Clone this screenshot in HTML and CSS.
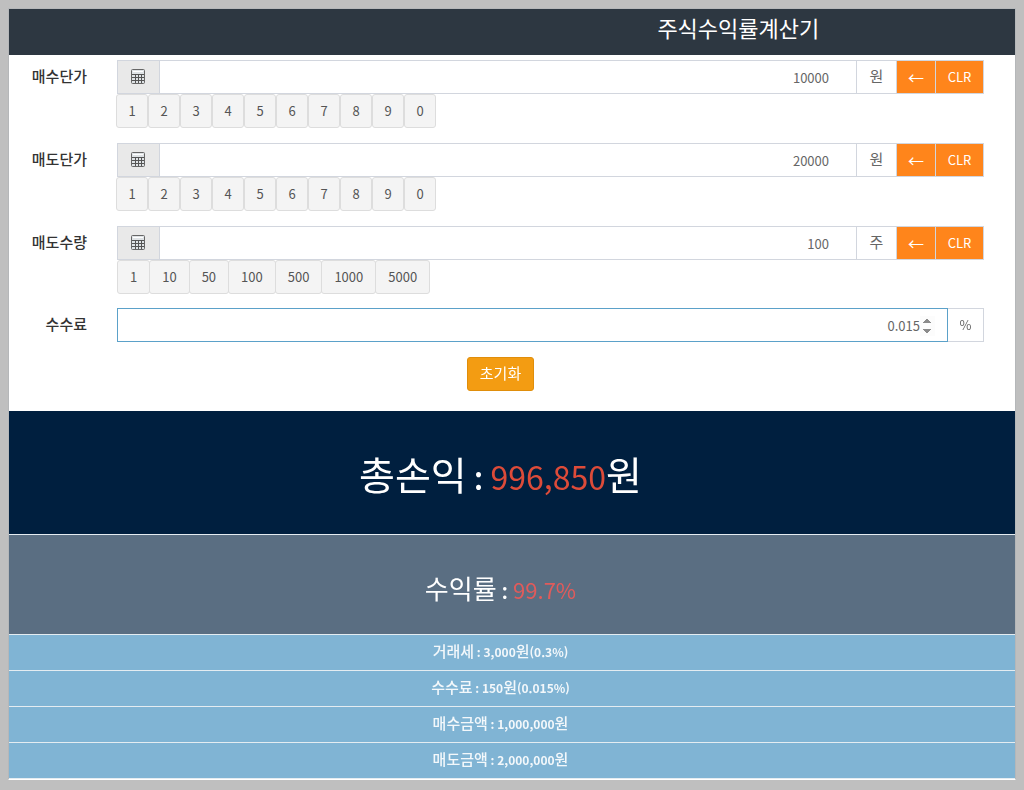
FILE: index.html
```html
<!DOCTYPE html>
<html lang="ko">
<head>
<meta charset="utf-8">
<meta name="viewport" content="width=device-width, initial-scale=1">
<title>주식수익률계산기</title>
<link rel="stylesheet" href="styles.css">
</head>
<body>
<svg class="defs" aria-hidden="true">
  <symbol id="calc" viewBox="0 0 14 15">
    <rect x="0.5" y="0.5" width="13" height="14" rx="1" fill="#dfe3e6" stroke="#666"/>
    <path d="M2 2.5h10" stroke="#fff"/>
    <path d="M1 5.5h12M1 8.5h12M1 11.5h12M4.5 5v9M7.5 5v9M10.5 5v9" fill="none" stroke="#555"/>
  </symbol>
</svg>
<main class="app">
  <header class="header"><h1 class="title">주식수익률계산기</h1></header>
  <form class="form">
    <div class="row">
      <label class="label" for="buy">매수단가</label>
      <div class="field">
        <div class="group">
          <span class="addon icon"><svg class="calc" aria-hidden="true"><use href="#calc"/></svg></span>
          <input class="input" id="buy" type="number" value="10000">
          <span class="addon unit">원</span>
          <button class="action back" type="button" aria-label="지우기">←</button>
          <button class="action clear" type="button">CLR</button>
        </div>
        <div class="keys digits">
          <button class="key" type="button">1</button><button class="key" type="button">2</button><button class="key" type="button">3</button><button class="key" type="button">4</button><button class="key" type="button">5</button><button class="key" type="button">6</button><button class="key" type="button">7</button><button class="key" type="button">8</button><button class="key" type="button">9</button><button class="key" type="button">0</button>
        </div>
      </div>
    </div>
    <div class="row">
      <label class="label" for="sell">매도단가</label>
      <div class="field">
        <div class="group">
          <span class="addon icon"><svg class="calc" aria-hidden="true"><use href="#calc"/></svg></span>
          <input class="input" id="sell" type="number" value="20000">
          <span class="addon unit">원</span>
          <button class="action back" type="button" aria-label="지우기">←</button>
          <button class="action clear" type="button">CLR</button>
        </div>
        <div class="keys digits">
          <button class="key" type="button">1</button><button class="key" type="button">2</button><button class="key" type="button">3</button><button class="key" type="button">4</button><button class="key" type="button">5</button><button class="key" type="button">6</button><button class="key" type="button">7</button><button class="key" type="button">8</button><button class="key" type="button">9</button><button class="key" type="button">0</button>
        </div>
      </div>
    </div>
    <div class="row">
      <label class="label" for="count">매도수량</label>
      <div class="field">
        <div class="group">
          <span class="addon icon"><svg class="calc" aria-hidden="true"><use href="#calc"/></svg></span>
          <input class="input" id="count" type="number" value="100">
          <span class="addon unit">주</span>
          <button class="action back" type="button" aria-label="지우기">←</button>
          <button class="action clear" type="button">CLR</button>
        </div>
        <div class="keys presets">
          <button class="key" type="button">1</button><button class="key" type="button">10</button><button class="key" type="button">50</button><button class="key" type="button">100</button><button class="key" type="button">500</button><button class="key" type="button">1000</button><button class="key" type="button">5000</button>
        </div>
      </div>
    </div>
    <div class="row">
      <label class="label" for="fee">수수료</label>
      <div class="field">
        <div class="group">
          <input class="input fee" id="fee" type="number" step="0.001" value="0.015" autofocus>
          <span class="addon percent">%</span>
        </div>
      </div>
    </div>
    <div class="submit"><button class="reset" type="button">초기화</button></div>
  </form>
  <section class="results">
    <p class="result total">총손익<span class="colon" lang="en"> : </span><span class="amount">996,850</span>원</p>
    <p class="result rate">수익률<span class="colon" lang="en"> : </span><span class="amount">99.7%</span></p>
    <p class="result detail">거래세<span class="colon" lang="en"> : </span><span class="amount">3,000</span>원<span class="amount">(0.3%)</span></p>
    <p class="result detail">수수료<span class="colon" lang="en"> : </span><span class="amount">150</span>원<span class="amount">(0.015%)</span></p>
    <p class="result detail">매수금액<span class="colon" lang="en"> : </span><span class="amount">1,000,000</span>원</p>
    <p class="result detail">매도금액<span class="colon" lang="en"> : </span><span class="amount">2,000,000</span>원</p>
  </section>
</main>
</body>
</html>
```
FILE: styles.css
```css
* { box-sizing: border-box; }
body {
  margin: 0;
  padding: 8px;
  background: #bfbfbf;
  color: #333;
  font: 13px/20px "Noto Sans CJK KR", sans-serif;
}
button, input { font: inherit; margin: 0; }
.defs { display: none; }
.app { background: #fff; border: 1px solid #b5b7b9; border-bottom-color: #fff; }
.header {
  height: 46px;
  padding: 2px 0 0 45%;
  background: #2d3741;
  color: #fff;
  text-align: center;
}
.title { margin: 0; font-size: 22px; font-weight: 400; line-height: 32px; }

.form { padding: 5px 31px 20px 0; }
.row {
  display: grid;
  grid-template-columns: 78px 1fr;
  column-gap: 30px;
  margin-bottom: 15px;
}
.row:nth-child(3) { margin-bottom: 14px; }
.label { padding-top: 6px; text-align: right; font-size: 15px; font-weight: 500; }
.field { min-width: 0; }
.group { display: flex; height: 34px; }
.addon {
  display: flex;
  justify-content: center;
  align-items: center;
  border: 1px solid #d2d6de;
  color: #666;
}
.icon { width: 43px; padding: 0 1px 1px 0; background: #e9e9e9; }
.calc { width: 14px; height: 15px; }
.unit { width: 40px; padding-bottom: 2px; border-left: 0; font-size: 15px; }
.percent { width: 36px; border-left: 0; }
.input {
  flex: 1;
  min-width: 0;
  padding: 2px 12px 0;
  border: 1px solid #d2d6de;
  border-left: 0;
  border-radius: 0;
  outline: 0;
  background: #fff;
  color: #666;
  text-align: right;
}
.fee { border: 1px solid #5ba1c9; }
.fee::-webkit-inner-spin-button { opacity: 1; }
.action {
  width: 39px;
  padding: 0;
  border: 1px solid #d2d6de;
  border-left: 0;
  background: #ff851b;
  color: #fff;
}
.back { font-size: 16px; }
.clear { width: 48px; }
.keys { display: flex; }
.key {
  height: 34px;
  padding: 0 12px;
  border: 1px solid #ddd;
  border-radius: 3px;
  background: #f4f4f4;
  color: #555;
}
.digits { margin-left: -1px; }
.digits .key { width: 32px; padding: 0; }
.presets .key + .key { margin-left: -1px; }
.submit { padding-left: 8px; text-align: center; }
.reset {
  height: 34px;
  padding: 0 12px 3px;
  border: 1px solid #e08e0b;
  border-radius: 3px;
  background: #f39c12;
  color: #fff;
  font-size: 15px;
}

.result {
  margin: 0;
  padding-right: 23px;
  border-bottom: 1px solid #e4ecf1;
  text-align: center;
}
.colon, .amount { line-height: 1; }
.total {
  padding-top: 34px;
  padding-bottom: 33px;
  background: #001f3f;
  color: #fff;
  font-size: 39px;
  line-height: 56px;
}
.colon { font-weight: 500; }
.total .colon { font-size: 32px; }
.total .amount { color: #dd4b39; font-size: 32px; }
.rate {
  padding-top: 35px;
  padding-bottom: 28px;
  background: #5a6e82;
  color: #fff;
  font-size: 26px;
  line-height: 36px;
}
.rate .colon { font-size: 22px; }
.rate .amount { color: #e05b5b; font-size: 22px; }
.detail {
  padding-top: 6px;
  padding-bottom: 9px;
  background: #80b4d4;
  color: #f3f8fb;
  font-size: 15px;
  font-weight: 500;
  line-height: 20px;
}
.detail .colon, .detail .amount { font-size: 12px; font-weight: 700; }
```
